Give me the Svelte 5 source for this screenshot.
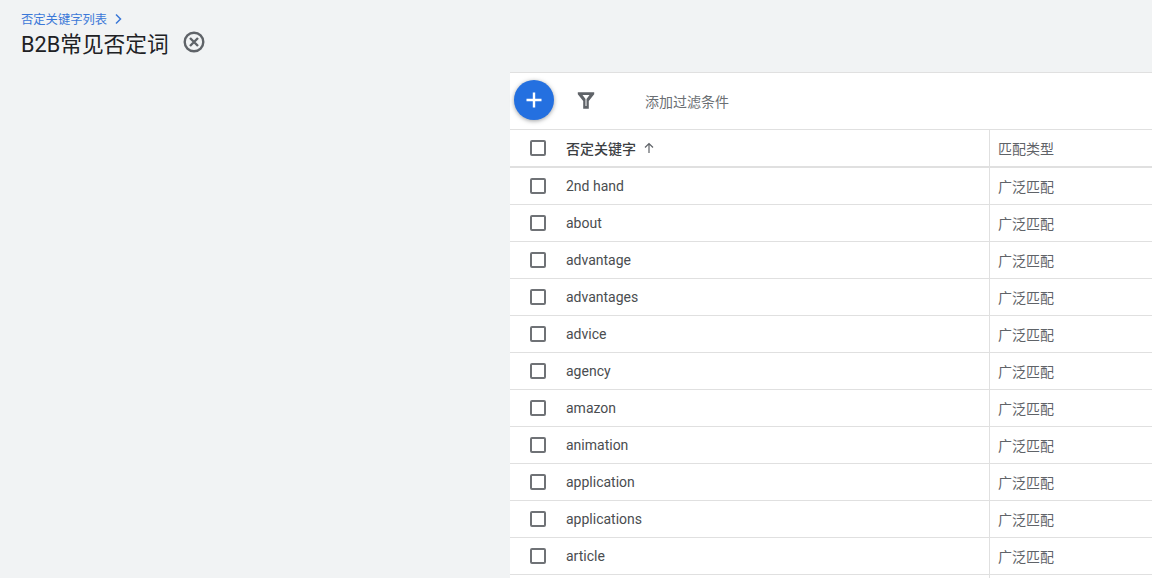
<script>
  const keywords = ['2nd hand', 'about', 'advantage', 'advantages', 'advice', 'agency', 'amazon', 'animation', 'application', 'applications', 'article'];
</script>

<div class="page">
  <header class="title-bar">
    <div class="crumb">
      <span>否定关键字列表</span>
      <svg width="10" height="12" viewBox="0 0 10 12" aria-hidden="true"><path d="M2 1.500 6.500 6 2 10.500" fill="none" stroke="#3b78d8" stroke-width="1.500"/></svg>
    </div>
    <div class="title">
      <h1>B2B常见否定词</h1>
      <svg class="close" width="24" height="24" viewBox="0 0 24 24" aria-hidden="true">
        <circle cx="12" cy="12" r="9.300" fill="none" stroke="#5f6368" stroke-width="2.400"/>
        <path d="M8 8l8 8M16 8l-8 8" fill="none" stroke="#5f6368" stroke-width="2.400"/>
      </svg>
    </div>
  </header>

  <section class="panel">
    <div class="toolbar">
      <button class="fab" aria-label="添加">
        <svg width="24" height="24" viewBox="0 0 24 24" aria-hidden="true"><path d="M12 4.500v15M4.500 12h15" stroke="#fff" stroke-width="2.400" fill="none"/></svg>
      </button>
      <svg class="filter" width="24" height="24" viewBox="0 0 24 24" aria-hidden="true"><path d="M3.800 4.200h16.400v2L14.800 13v7.800H9.200V13L3.800 6.200z M8.500 7l3 4v7h1v-7l3-4z" fill="#5f6368" fill-rule="evenodd"/></svg>
      <span class="add-filter">添加过滤条件</span>
    </div>

    <div class="row head">
      <div class="check"><span class="box"></span></div>
      <div class="kw">否定关键字 <svg class="sort" width="14" height="14" viewBox="0 0 14 14" aria-hidden="true"><path d="M7 12V3M3 6.500 7 2.500l4 4" fill="none" stroke="#5f6368" stroke-width="1.200"/></svg></div>
      <div class="type">匹配类型</div>
    </div>

    {#each keywords as word}
      <div class="row">
        <div class="check"><span class="box"></span></div>
        <div class="kw">{word}</div>
        <div class="type">广泛匹配</div>
      </div>
    {/each}

    <div class="row">
      <div class="check"></div>
      <div class="kw"></div>
      <div class="type"></div>
    </div>
  </section>
</div>

<style>
  :global(body) {
    background: #f1f3f4;
    overflow: hidden;
  }

  .page {
    height: 578px;
    overflow: hidden;
    font-family: Roboto, "Noto Sans CJK SC", sans-serif;
    color: #4a4d50;
  }

  .title-bar {
    height: 72px;
    box-sizing: border-box;
    padding: 12px 0 0 21px;
  }

  .crumb {
    display: flex;
    align-items: center;
    gap: 7px;
    height: 14px;
    font-size: 12.300px;
    color: #3b78d8;
  }

  .title {
    display: flex;
    align-items: center;
    gap: 13px;
    height: 32px;
  }

  h1 {
    margin: 0;
    font-size: 21.700px;
    font-weight: 400;
    color: #202124;
  }

  .panel {
    margin-left: 510px;
    background: #fff;
    border-top: 1px solid #e0e0e0;
  }

  .toolbar {
    display: flex;
    align-items: center;
    height: 54px;
    padding: 0 0 2px 4px;
    border-bottom: 1px solid #e0e0e0;
  }

  .fab {
    display: flex;
    align-items: center;
    justify-content: center;
    width: 40px;
    height: 40px;
    padding: 0;
    border: none;
    border-radius: 50%;
    background: #2470e0;
    box-shadow: 0 1px 4px rgba(60, 64, 67, 0.5);
  }

  .filter {
    margin-left: 20px;
  }

  .add-filter {
    margin-left: 47px;
    padding-top: 2px;
    font-size: 14px;
    color: #6b6f73;
  }

  .row {
    display: flex;
    align-items: stretch;
    height: 36px;
    border-bottom: 1px solid #e0e0e0;
    font-size: 14px;
  }

  .row.head {
    height: 36px;
    border-bottom-width: 2px;
  }

  .check {
    display: flex;
    align-items: center;
    width: 56px;
    padding-left: 20px;
    box-sizing: border-box;
    flex: none;
  }

  .box {
    width: 12px;
    height: 12px;
    border: 2px solid #6f7276;
    border-radius: 2px;
  }

  .kw {
    display: flex;
    align-items: center;
    gap: 6px;
    width: 423px;
    flex: none;
  }

  .head .kw {
    font-weight: 500;
    color: #3c4043;
  }

  .type {
    display: flex;
    align-items: center;
    flex: 1;
    padding-left: 8px;
    border-left: 1px solid #e0e0e0;
    color: #5f6368;
  }
</style>
